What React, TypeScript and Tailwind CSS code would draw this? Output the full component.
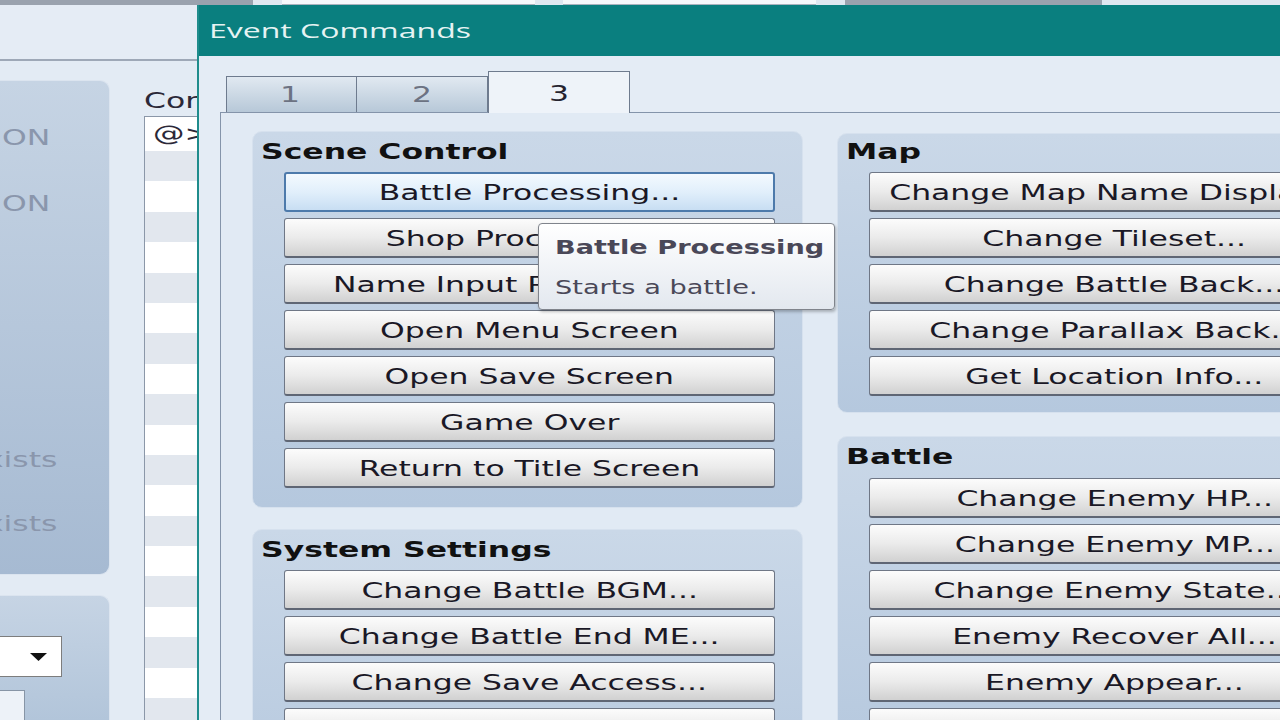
import React from "react";

const FONT = { fontFamily: '"DejaVu Sans", Verdana, sans-serif' };

function Txt({ children, className = "" }: { children: React.ReactNode; className?: string }) {
  return <span className={"inline-block whitespace-nowrap scale-x-[1.43] " + className}>{children}</span>;
}

function Btn({ label, focused = false }: { label: string; focused?: boolean }) {
  return (
    <div
      className={
        focused
          ? "h-[40px] w-[491px] shrink-0 rounded-[3px] border-2 border-[#4d7aab] bg-linear-to-b from-[#f3f9fe] via-[#e1effb] to-[#c8def3] flex items-center justify-center"
          : "h-[40px] w-[491px] shrink-0 rounded-[3px] border border-[#6f7786] border-b-2 border-b-[#5f6674] bg-linear-to-b from-[#fcfcfc] via-[#ebebeb] to-[#d1d1d1] flex items-center justify-center"
      }
    >
      <Txt className="text-[22px] leading-[26px] text-[#1a1826] pt-[2px]">{label}</Txt>
    </div>
  );
}

function Group({
  title,
  items,
  focusedIndex = -1,
  className = "",
  listClass = "mt-[8px]",
}: {
  title: string;
  items: string[];
  focusedIndex?: number;
  className?: string;
  listClass?: string;
}) {
  return (
    <div
      className={
        "w-[551px] shrink-0 rounded-[10px] border border-[#d6e1ee] bg-linear-to-b from-[#cad8e8] to-[#b5c8de] pl-[31px] pr-[28px] " +
        className
      }
    >
      <div className="-ml-[23px] h-[24px] flex items-center">
        <Txt className="origin-left text-[22px] font-bold leading-[24px] text-[#111111]">{title}</Txt>
      </div>
      <div className={"flex flex-col gap-[6px] " + listClass}>
        {items.map((it, i) => (
          <Btn key={it} label={it} focused={i === focusedIndex} />
        ))}
      </div>
    </div>
  );
}

export default function App() {
  const listRows = Array.from({ length: 20 });
  return (
    <div className="relative w-[1280px] h-[720px] overflow-hidden bg-[#e3ebf4]" style={FONT}>
      {/* top strip of background window tabs */}
      <div className="h-[5px] flex bg-[#dfe7f0]">
        <div className="w-[253px] bg-[#9aa2ae]" />
        <div className="w-[29px]" />
        <div className="w-[253px] bg-[#f6f8fb] border-b border-[#aab2bd]" />
        <div className="w-[28px]" />
        <div className="w-[253px] bg-[#f6f8fb] border-b border-[#aab2bd]" />
        <div className="w-[29px]" />
        <div className="w-[257px] bg-[#9aa2ae]" />
      </div>

      <div className="flex h-[715px]">
        {/* background editor window (left) */}
        <div className="w-[197px] shrink-0 overflow-hidden flex flex-col">
          <div className="h-[56px] shrink-0 border-b-2 border-[#9ea8b7] bg-[#e5ecf5]" />
          <div className="flex flex-1 min-h-0">
            <div className="w-[110px] shrink-0 pt-[19px] flex flex-col">
              <div className="h-[495px] shrink-0 rounded-r-[10px] border border-l-0 border-[#dbe4ef] bg-linear-to-b from-[#c6d4e4] to-[#a6bad2] relative">
                <div className="absolute left-[2px] top-[44px]">
                  <Txt className="origin-left text-[22px] leading-[26px] text-[#8a96ac]">ON</Txt>
                </div>
                <div className="absolute left-[2px] top-[110px]">
                  <Txt className="origin-left text-[22px] leading-[26px] text-[#8a96ac]">ON</Txt>
                </div>
                <div className="absolute left-[-15px] top-[366px]">
                  <Txt className="origin-left text-[22px] leading-[26px] text-[#8a96ac]">xists</Txt>
                </div>
                <div className="absolute left-[-15px] top-[430px]">
                  <Txt className="origin-left text-[22px] leading-[26px] text-[#8a96ac]">xists</Txt>
                </div>
              </div>
              <div className="mt-[20px] flex-1 min-h-0 rounded-tr-[10px] border border-l-0 border-b-0 border-[#dbe4ef] bg-linear-to-b from-[#c6d4e4] to-[#b2c5da] pt-[40px]">
                <div className="w-[62px] h-[41px] bg-white border border-l-0 border-[#7d7d7d] flex items-center justify-end pr-[14px]">
                  <svg width="17" height="8" viewBox="0 0 17 8">
                    <polygon points="0,0 17,0 8.5,8" fill="#111" />
                  </svg>
                </div>
                <div className="mt-[13px] w-[25px] h-[40px] bg-[#edf2f8] border border-l-0 border-[#8795a6]" />
              </div>
            </div>
            <div className="w-[34px] shrink-0" />
            <div className="flex-1 flex flex-col">
              <div className="h-[55px] shrink-0 flex items-end pb-[2px]">
                <Txt className="origin-left text-[22px] leading-[26px] text-[#2b2838]">Contents</Txt>
              </div>
              <div className="flex-1 border-l border-t border-[#8b97a8] bg-white overflow-hidden">
                <div className="h-[34px] flex items-center pl-[8px]">
                  <Txt className="origin-left text-[22px] leading-[26px] text-[#2b2838]">@&gt;</Txt>
                </div>
                {listRows.map((_, i) => (
                  <div key={i} className={i % 2 === 0 ? "h-[30.4px] bg-[#e2e7ee]" : "h-[30.4px] bg-white"} />
                ))}
              </div>
            </div>
          </div>
        </div>

        {/* Event Commands dialog */}
        <div className="w-[1240px] shrink-0 border-l-2 border-[#1f8c8c] flex flex-col bg-[#e4ecf5]">
          <div className="h-[51px] shrink-0 bg-[#0a7f7f] flex items-center pl-[10px]">
            <span
              className="inline-block whitespace-nowrap origin-left scale-x-[1.6] text-[20px] text-[#e6f3f3]"
              style={{ fontFamily: '"Open Sans", "Noto Sans", sans-serif' }}
            >
              Event Commands
            </span>
          </div>
          <div className="flex-1 pl-[21px] pt-[15px] flex flex-col">
            <div className="flex items-end h-[41px] shrink-0">
              <div className="ml-[6px] w-[131px] h-[36px] border border-b-0 border-[#6e7b8e] bg-linear-to-b from-[#e1e9f1] to-[#b7c8d8] flex items-center justify-center pr-[4px]">
                <Txt className="text-[22px] leading-[26px] text-[#6c7282]">1</Txt>
              </div>
              <div className="w-[131px] h-[36px] border border-b-0 border-l-0 border-[#6e7b8e] bg-linear-to-b from-[#e1e9f1] to-[#b7c8d8] flex items-center justify-center">
                <Txt className="text-[22px] leading-[26px] text-[#6c7282]">2</Txt>
              </div>
              <div className="relative z-10 -mb-px w-[142px] h-[42px] border border-b-0 border-[#6e7b8e] bg-[#eef3f9] flex items-start justify-center pt-[9px]">
                <Txt className="text-[22px] leading-[26px] text-[#25232f]">3</Txt>
              </div>
            </div>
            <div className="flex-1 border border-r-0 border-b-0 border-[#8494aa] bg-[#e1eaf4] pt-[18px] pl-[31px] flex gap-[34px]">
              <div className="flex flex-col gap-[21px]">
                <Group
                  title="Scene Control"
                  className="pt-[8px] pb-[19px]"
                  focusedIndex={0}
                  items={[
                    "Battle Processing...",
                    "Shop Processing...",
                    "Name Input Processing...",
                    "Open Menu Screen",
                    "Open Save Screen",
                    "Game Over",
                    "Return to Title Screen",
                  ]}
                />
                <Group
                  title="System Settings"
                  className="pt-[8px] pb-[20px]"
                  items={[
                    "Change Battle BGM...",
                    "Change Battle End ME...",
                    "Change Save Access...",
                    "Change Menu Access...",
                    "Change Encounter...",
                  ]}
                />
              </div>
              <div className="flex flex-col gap-[23px] pt-[2px]">
                <Group
                  title="Map"
                  className="pt-[6px] pb-[16px]"
                  listClass="mt-[8px]"
                  items={[
                    "Change Map Name Display...",
                    "Change Tileset...",
                    "Change Battle Back...",
                    "Change Parallax Back...",
                    "Get Location Info...",
                  ]}
                />
                <Group
                  title="Battle"
                  className="pt-[8px] pb-[20px]"
                  listClass="mt-[9px]"
                  items={[
                    "Change Enemy HP...",
                    "Change Enemy MP...",
                    "Change Enemy State...",
                    "Enemy Recover All...",
                    "Enemy Appear...",
                    "Enemy Transform...",
                  ]}
                />
              </div>
            </div>
          </div>
        </div>
      </div>

      {/* tooltip */}
      <div className="absolute left-[538px] top-[223px] w-[297px] h-[87px] rounded-[4px] border border-[#80848c] bg-linear-to-b from-[#ffffff] to-[#e3e8ef] shadow-[1px_2px_3px_rgba(0,0,0,0.25)] pl-[16px] pt-[10px]">
        <div className="h-[26px] flex items-center">
          <Txt className="origin-left scale-x-[1.38] text-[19px] font-bold leading-[24px] text-[#4a4858]">Battle Processing</Txt>
        </div>
        <div className="mt-[14px] h-[26px] flex items-center">
          <Txt className="origin-left scale-x-[1.4] text-[19px] leading-[24px] text-[#4a4858]">Starts a battle.</Txt>
        </div>
      </div>
    </div>
  );
}
